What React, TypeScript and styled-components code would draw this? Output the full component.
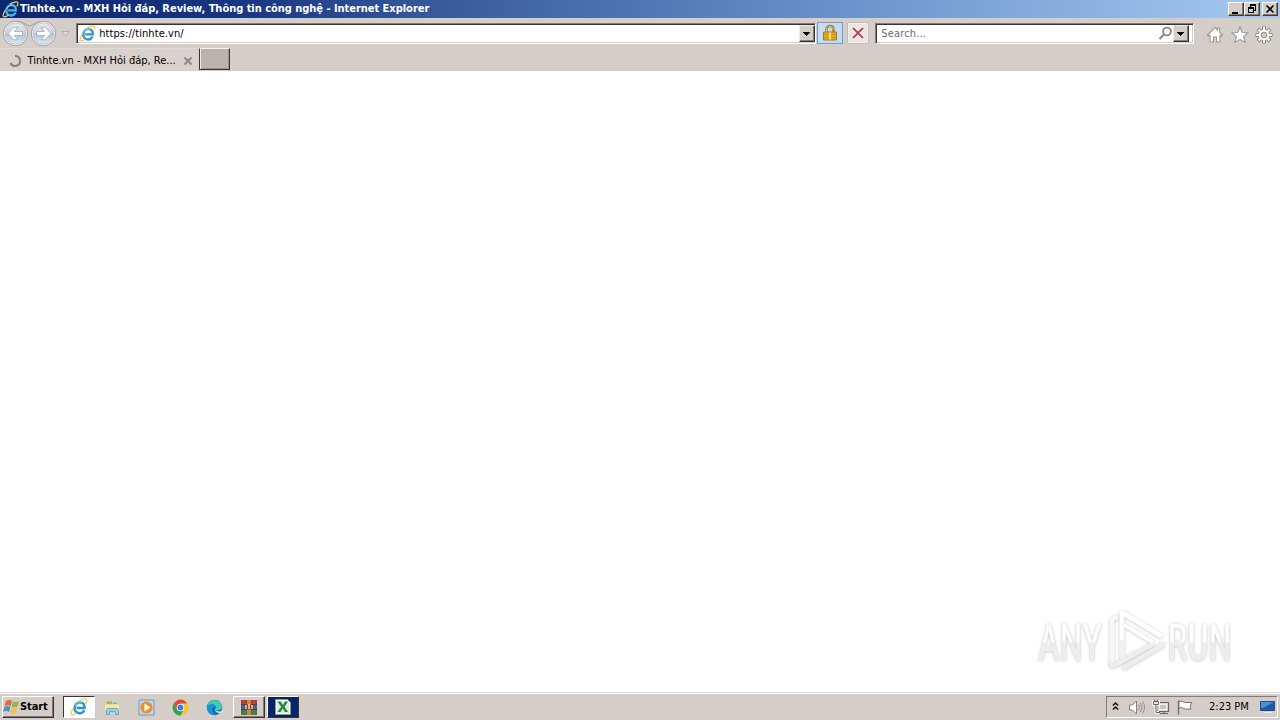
import * as React from 'react'
import styled, { createGlobalStyle } from 'styled-components'

const FACE = '#d5cec8'
const SHADOW = '#827c79'
const DARK = '#3b3235'

const GlobalStyle = createGlobalStyle`
  * { box-sizing: border-box; }
  body { margin: 0; overflow: hidden; }
  svg { display: block; flex: none; }
`

const Screen = styled.div`
  width: 1280px;
  height: 720px;
  display: flex;
  flex-direction: column;
  background: #fff;
  font-family: 'DejaVu Sans Condensed', 'DejaVu Sans', Tahoma, sans-serif;
  font-stretch: condensed;
  font-size: 11px;
  color: #000;
  cursor: default;
`

const TitleBar = styled.header`
  height: 18px;
  flex: none;
  display: flex;
  align-items: center;
  padding: 0 2px;
  background: linear-gradient(90deg, #0c2770 0%, #183580 18%, #395b9c 35%, #6c92cb 66%, #a6caf0 100%);
`

const Text = styled.span<{ $spacing?: number; $bold?: boolean; $color?: string }>`
  white-space: nowrap;
  line-height: 14px;
  letter-spacing: ${p => p.$spacing || 0}px;
  font-weight: ${p => (p.$bold ? 700 : 400)};
  color: ${p => p.$color || '#000'};
`

const Title = styled(Text)`
  margin-left: 1px;
`

const Spacer = styled.div`
  flex: 1;
`

const WindowButtons = styled.div`
  display: flex;
  align-self: flex-start;
  padding-top: 2px;
`

const CaptionButton = styled.div<{ $gap?: number }>`
  width: 16px;
  height: 14px;
  margin-left: ${p => p.$gap || 0}px;
  background: ${FACE};
  border: 1px solid;
  border-color: #fff #403b3b #403b3b #fff;
  box-shadow: inset -1px -1px ${SHADOW};
`

const NavBar = styled.nav`
  height: 30px;
  flex: none;
  display: flex;
  align-items: flex-start;
  padding: 0 7px 0 2px;
  background: ${FACE};
`

const NavIcons = styled.div`
  display: flex;
  width: 74px;
  height: 30px;
`

const Field = styled.div<{ $width: number; $end?: number }>`
  width: ${p => p.$width}px;
  height: 21px;
  margin-top: 5px;
  display: flex;
  align-items: center;
  background: #fff;
  border: 1px solid;
  border-color: ${SHADOW} #fff #fff ${SHADOW};
  box-shadow: inset 1px 1px ${DARK}, inset -1px -1px ${FACE};
  padding: 0 ${p => p.$end || 0}px 0 2px;
`

const DropButton = styled.div`
  width: 16px;
  height: 17px;
  display: flex;
  align-items: center;
  justify-content: center;
  background: ${FACE};
  border: 1px solid;
  border-color: #eee9e6 ${DARK} ${DARK} #eee9e6;
  box-shadow: inset -1px -1px ${SHADOW};
`

const ToolButton = styled.div<{ $lit?: boolean }>`
  width: ${p => (p.$lit ? 26 : 22)}px;
  height: 22px;
  margin: 4px 0 0 ${p => (p.$lit ? 1 : 4)}px;
  display: flex;
  align-items: center;
  justify-content: center;
  background: ${p => (p.$lit ? '#c6dcf5' : '#eae5e3')};
  border: 1px solid ${p => (p.$lit ? '#6f9ed2' : '#c2bbb8')};
  border-radius: ${p => (p.$lit ? 0 : 2)}px;
  box-shadow: ${p => (p.$lit ? 'none' : 'inset 0 0 0 1px #f4f0ef')};
`

const Commands = styled.div`
  display: flex;
  gap: 6.5px;
  margin: 8px 0 0 12px;
`

const TabBar = styled.div`
  height: 23px;
  flex: none;
  display: flex;
  background: ${FACE};
`

const Tab = styled.div`
  width: 199px;
  height: 23px;
  display: flex;
  align-items: center;
  padding: 1px 6px 0 8px;
  background: #d8d1cc;
  border-top: 1px solid #e3ddd9;
`

const TabText = styled(Text)`
  margin-left: 5.5px;
`

const NewTab = styled.div`
  width: 31px;
  height: 22px;
  background: #bbb3ae;
  border: 1px solid;
  border-color: #f5f1ef ${DARK} ${DARK} ${DARK};
  box-shadow: inset 1px 0 #eee9e6, inset -1px -1px #98908d;
`

const Page = styled.main`
  flex: 1;
  display: flex;
  justify-content: flex-end;
  align-items: flex-end;
  padding: 0 38px 12px 0;
`

const TaskBar = styled.footer`
  height: 28px;
  flex: none;
  display: flex;
  align-items: flex-start;
  padding: 2px 2px 0;
  background: ${FACE};
  border-top: 1px solid #dcd6d2;
  box-shadow: inset 0 1px #fff;
`

const Raised = styled.div<{ $width: number; $gap?: number; $look?: 'pressed' | 'navy' }>`
  width: ${p => p.$width}px;
  height: 22px;
  margin-top: 1px;
  margin-left: ${p => p.$gap || 0}px;
  display: flex;
  align-items: center;
  justify-content: center;
  background: ${p => (p.$look === 'pressed' ? '#fff' : p.$look === 'navy' ? '#0a246a' : FACE)};
  border: 1px solid;
  border-color: ${p => (p.$look === 'pressed' ? `${DARK} #fff #fff ${DARK}` : `#fff ${DARK} ${DARK} #fff`)};
  box-shadow: ${p => (p.$look ? 'none' : `inset -1px -1px ${SHADOW}`)};
`

const StartButton = styled(Raised)`
  justify-content: flex-start;
`

const QuickLaunch = styled.div`
  display: flex;
  margin-left: 9px;
`

const Slot = styled.div`
  width: 34px;
  height: 24px;
  display: flex;
  align-items: center;
  justify-content: center;
`

const Tray = styled.div`
  width: 172px;
  height: 22px;
  margin-top: 1px;
  display: flex;
  align-items: center;
  padding-left: 5px;
  border: 1px solid;
  border-color: ${SHADOW} #fff #fff ${SHADOW};
`

const Clock = styled(Text)`
  width: 40px;
  margin: 0 10px 0 13px;
`

const IeIcon = ({ size = 17, color = '#2b95d2' }: { size?: number; color?: string }) => (
  <svg width={size} height={size} viewBox="0 0 18 18" fill="none">
    <path d="M14.300 12.200C13.200 14.400 11.400 15.500 9.300 15.300c-3-.2-4.900-2.300-4.700-5.200C4.800 6.800 7.200 4.300 10.200 4.400c3 .1 4.700 2.200 4.400 5.500H6.500" stroke={color} strokeWidth="2.500" />
    <path d="M5 8C6.200 5.500 8.500 4.100 11.600 4.600" stroke="#8ad8f6" strokeWidth="1" />
    <path d="M3.600 9.500C.9 13.500.3 17 2.800 16.800c1.300-.1 2.600-.9 4-2M8 3.500C12 1 16 .1 16.700 1.900c.4 1-.1 2.400-1 3.900" stroke="#f3c84c" strokeWidth="1.300" />
  </svg>
)

const Arrow = () => (
  <svg width="8" height="4" viewBox="0 0 8 4" shapeRendering="crispEdges"><path d="M0 0h7L3.500 4z" /></svg>
)

const NavArrows = () => (
  <svg width="74" height="30" viewBox="0 0 74 30">
    <defs>
      <linearGradient id="round" x1="0" y1="0" x2="0" y2="1">
        <stop offset="0" stopColor="#e9eaed" /><stop offset=".48" stopColor="#ccd3dc" />
        <stop offset=".52" stopColor="#b3c2d1" /><stop offset="1" stopColor="#d5edf7" />
      </linearGradient>
    </defs>
    <path d="M13.500 3.500Q20 3 25 7q2.500 1.500 5 0 5-4 11.500-3.500" fill="none" stroke="#a29c9c" />
    {[13.5, 41.5].map((x, i) => (
      <g key={x}>
        <circle cx={x} cy="15.500" r="12.200" fill="#f1f2f4" stroke="#a19fa4" />
        <circle cx={x} cy="15.500" r="10.500" fill="url(#round)" stroke="#b8bec8" strokeWidth=".7" />
        <path
          transform={`translate(${x} 15.5) scale(${i ? -1 : 1} 1)`}
          d="M-7.500 0-1.500-6.200h4L-1.200-2H7v4h-8.200l3.700 4.200h-4z"
          fill="#fff" stroke="#9aa9b9" strokeWidth=".8"
        />
      </g>
    ))}
    <path d="M59.500 13.500h8L63.500 18z" fill="#e1dcd8" stroke="#aaa3a0" strokeWidth=".8" />
  </svg>
)

const LockIcon = () => (
  <svg width="16" height="18" viewBox="0 0 16 18">
    <path d="M4.500 9V5.500C4.500 .9 11.500 .9 11.500 5.500V9" fill="none" stroke="#a4802d" strokeWidth="2.400" />
    <path d="M4.500 8V5.500C4.500 1.600 11.500 1.600 11.500 5.500" fill="none" stroke="#dfc170" />
    <path d="M1.500 8h13v8h-13z" fill="#e1aa20" stroke="#a5781b" />
    <path d="M2 10.500h12M2 13.500h12" stroke="#c6942a" /><path d="M7 8.500h2v7H7z" fill="#f9de71" />
  </svg>
)

const StopIcon = () => (
  <svg width="14" height="14" viewBox="0 0 14 14"><path d="m2 2 10 10M12 2 2 12" stroke="#fff" strokeWidth="3.500" /><path d="m2 2 10 10M12 2 2 12" stroke="#b94b50" strokeWidth="2.100" /></svg>
)

const SearchIcon = () => (
  <svg width="15" height="15" viewBox="0 0 15 15" fill="none"><circle cx="9" cy="5.500" r="3.900" stroke="#8c8988" strokeWidth="1.900" /><path d="m6.200 8.300-4.700 4.700" stroke="#8c8988" strokeWidth="2.300" /></svg>
)

const commandPaths = [
  'M1.500 9 9 1.500l2.500 2.400V2h2v4l3 3-1.200 1.200-1.300-1V16h-3.500v-5h-3v5H4V9.200l-1.300 1z',
  'M9 1l2.300 5.500 5.700.4-4.400 3.800 1.500 5.700L9 13.300l-5.100 3.100 1.500-5.700L1 6.900l5.700-.4z',
]

const CommandIcons = () => (
  <Commands>
    {commandPaths.map(d => (
      <svg key={d} width="18" height="18" viewBox="0 0 18 18"><path d={d} fill="#fff" stroke="#9b9796" strokeWidth="1.100" /></svg>
    ))}
    <svg width="18" height="18" viewBox="-9 -9 18 18">
      {[0, 45, 90, 135, 180, 225, 270, 315].map(a => (
        <path key={a} transform={`rotate(${a})`} d="M-1.500-5v-3.100h3v3.100" fill="#fff" stroke="#8c8887" />
      ))}
      <circle r="5.600" fill="#fff" stroke="#8c8887" strokeWidth=".8" />
      <path d="M-1-7.500h2v15h-2zM-7.500-1h15v2h-15z" fill="#fff" />
      <path transform="rotate(45)" d="M-1-7.500h2v15h-2zM-7.500-1h15v2h-15z" fill="#fff" />
      <circle r="2.800" fill={FACE} stroke="#888483" />
    </svg>
  </Commands>
)

const Watermark = () => (
  <svg width="206" height="72" viewBox="0 0 206 72">
    <defs>
      <linearGradient id="fade" gradientUnits="userSpaceOnUse" x1="0" y1="-36" x2="0" y2="0">
        <stop offset=".5" stopColor="#fff" /><stop offset=".54" stopColor="#ededed" />
      </linearGradient>
      <filter id="soft" x="-10%" y="-20%" width="120%" height="140%">
        <feDropShadow dx="0" dy=".5" stdDeviation="1.500" floodColor="#777" floodOpacity=".48" />
      </filter>
    </defs>
    <g filter="url(#soft)">
      <g fontFamily="Roboto, sans-serif" fontSize="50" fill="url(#fade)" stroke="#f1f1f1" strokeWidth=".5">
        <text transform="translate(2 51.500) scale(.75 1)">ANY</text>
        <text transform="translate(131.500 51.500) scale(.75 1)">RUN</text>
      </g>
      <g fill="none" strokeWidth="4.500" strokeLinejoin="round">
        <path d="M75 52V55q0 3 3 2.500l40-22M87 60l38-22q2-1.500 1-4" stroke="#eee" />
        <path d="M82 10h-3q-3 0-3 4v40" stroke="#f7f7f7" />
        <path d="M86 50V4.500l40 24" stroke="#fff" />
        <path d="M88 17l29 17.500" stroke="#fff" strokeWidth="3.500" />
        <path d="M86 32v19" stroke="#f1f1f1" />
      </g>
    </g>
  </svg>
)

const StartFlag = () => (
  <svg width="17" height="16" viewBox="0 0 17 16">
    <path d="M3 2q3-2 6-.2L7.700 7Q5 5.500 1.700 7z" fill="#e5683a" />
    <path d="M10 2.300q3 1.500 6 0L14.500 7.500q-3 1.700-6 0z" fill="#8bb94a" />
    <path d="M1.400 8q3-1.800 6-.2L6 13q-3-1.800-6 .1z" fill="#4a93cf" />
    <path d="M8.300 8.500q3 1.600 6 0L13 13.600q-3 1.800-6 0z" fill="#f3c047" />
  </svg>
)

const FolderIcon = () => (
  <svg width="17" height="17" viewBox="0 0 17 17">
    <path d="M1 2h5l1 1.500h8V13H1z" fill="#e7cd72" /><path d="M3 2.500h5V5H3z" fill="#82bd70" /><path d="M9 3.500h4V5H9z" fill="#6ab4dd" />
    <path d="M1 5.500h14v6H1z" fill="#f6e7a5" />
    <path d="M2.500 15.500v-4q0-2 2-2h8q2 0 2 2v4h-3v-3h-6v3z" fill="#9fd0ea" stroke="#5da9d1" />
  </svg>
)

const MediaIcon = () => (
  <svg width="17" height="17" viewBox="0 0 17 17">
    <path d="M1 1h15v15H1z" fill="#b9d9ef" stroke="#659dc4" /><circle cx="8.500" cy="8.500" r="6" fill="#f28b20" /><path d="m6.500 4.500 6 4-6 4z" fill="#fff" />
  </svg>
)

const ChromeIcon = () => (
  <svg width="17" height="17" viewBox="-8.500 -8.500 17 17">
    <circle r="7.900" fill="#f6c42d" />
    <path d="M-6.800-4A7.900 7.900 0 0 1 6.800-4H0L-3.300 1.900z" fill="#dd493c" />
    <path d="M-6.800-4A7.900 7.900 0 0 0 0 7.900L3.300 1.900H-3.300z" fill="#35a156" />
    <circle r="3.800" fill="#fff" /><circle r="2.900" fill="#3d7de0" />
  </svg>
)

const EdgeIcon = () => (
  <svg width="17" height="17" viewBox="0 0 17 17">
    <circle cx="8.500" cy="8.500" r="7.800" fill="#1671bd" />
    <path d="M1 7.500C2 3 5 .8 8.800 1c4.500.2 7.300 3.500 7.300 6.500 0 2.500-2 4-4.500 3.800-2.500 0-2-1.300-1.600-2.300C9.800 5 4 4 1 7.500z" fill="#45c8b0" />
    <path d="M1 7.500C3.200 4.200 8.500 4.600 10 8c-2.500-1-4.500 1-4 3.500S8 15 9.500 16C3 16.500.6 11.500 1 7.500z" fill="#1b92d4" />
    <path d="M10 8.300c-2 2.200.5 5.500 5.800 3.600L17 11v2l-2.500 1C10 14.500 7.500 11 10 8.300z" fill="#dfe3e4" />
  </svg>
)

const RarIcon = () => (
  <svg width="18" height="17" viewBox="0 0 18 17">
    <path d="M1 1h16v5H1z" fill="#b73538" /><path d="M1 6h16v5H1z" fill="#356c9e" /><path d="M1 11h16v5H1z" fill="#347f50" />
    <path d="M1 5.500h16M1 10.500h16" stroke="#682f33" /><path d="M7 1h4v15H7z" fill="#c28a3c" />
    <path d="M4.500 5.500h9v5h-9z" fill="#773d31" /><path d="M6 6v4M9 5v5M12 6v4" stroke="#fff2c7" strokeWidth="1.300" />
    <path d="M4 1v4M14 1v4M4 11v5M14 11v5" stroke="#c95244" />
  </svg>
)

const ExcelIcon = () => (
  <svg width="18" height="18" viewBox="0 0 18 18">
    <path d="M1.500 1.500h12l3 3v12h-15z" fill="#fff" stroke="#6da679" /><path d="M3 3h10l2 2v10H3z" fill="#dcecd6" />
    <path d="M3.500 3.500h3L9 7l2-3.500h3l-3.500 5.300L14 14h-3l-2.200-3.500L6.500 14h-3l3.700-5.300z" fill="#278248" />
  </svg>
)

const TrayIcons = () => (
  <svg width="84" height="20" viewBox="0 0 84 20" fill="none">
    <path d="m.9 8.500 2.600-2.500 2.600 2.500M.9 12.500l2.600-2.500 2.600 2.500" stroke="#111" strokeWidth="1.600" />
    <path d="M17.500 8h3l4-4v13l-4-4h-3z" fill="#fff" stroke="#85817f" />
    <path d="M26.500 7.500q2 3 0 6M28.500 6q3 4.500 0 9M30.500 4.500q4 6 0 12" stroke="#918c8a" />
    <path d="M45.500 5.500h11v9h-11z" fill="#dedbd9" stroke="#696564" strokeWidth="1.200" /><path d="M47.500 7.500h7v5h-7z" fill="#c7c3c0" stroke="#f4f2f1" />
    <path d="M48 16.500h8M52 15v2" stroke="#696564" strokeWidth="1.200" />
    <path d="M41.500 3v4.500h5V3M44 7.500v8h3" stroke="#f4f2f1" strokeWidth="3" />
    <path d="M41.500 4.500h5v3h-5zM42.500 2.500v2M45.500 2.500v2M44 8v7.500h4" stroke="#696564" />
    <path d="M66.500 3.500v14" stroke="#777372" strokeWidth="1.500" />
    <path d="M67 4.500q3-1 6 1h7l-2 3.500 1 3h-6q-3-2-6-1z" fill="#fff" stroke="#777372" />
  </svg>
)

export default () => (
  <Screen>
    <GlobalStyle />
    <TitleBar>
      <IeIcon color="#43b4ea" />
      <Title $bold $color="#fff" $spacing={-0.03}>Tinhte.vn - MXH Hỏi đáp, Review, Thông tin công nghệ - Internet Explorer</Title>
      <Spacer />
      <WindowButtons>
        <CaptionButton><svg width="14" height="12"><path d="M3 9h6v2H3z" /></svg></CaptionButton>
        <CaptionButton>
          <svg width="14" height="12" fill="none" stroke="#000" shapeRendering="crispEdges"><path d="M5 2h6M5.500 2v3M10.500 2v5H9M3 5h6M3.500 5v4.500h5V5M5 1.500h6M3 4.500h6" /></svg>
        </CaptionButton>
        <CaptionButton $gap={2}>
          <svg width="14" height="12"><path d="m3.500 2.500 7 7M10.500 2.500l-7 7" stroke="#000" strokeWidth="1.600" /></svg>
        </CaptionButton>
      </WindowButtons>
    </TitleBar>
    <NavBar>
      <NavIcons><NavArrows /></NavIcons>
      <Field $width={740}>
        <IeIcon />
        <Text $spacing={0.07}>&nbsp;https://tinhte.vn/</Text>
        <Spacer />
        <DropButton><Arrow /></DropButton>
      </Field>
      <ToolButton $lit><LockIcon /></ToolButton>
      <ToolButton><StopIcon /></ToolButton>
      <Spacer />
      <Field $width={319} $end={4}>
        <Text $color="#6d6d6d" $spacing={0.15}>&nbsp;Search...</Text>
        <Spacer />
        <SearchIcon />
        <DropButton><Arrow /></DropButton>
      </Field>
      <CommandIcons />
    </NavBar>
    <TabBar>
      <Tab>
        <svg width="14" height="14" viewBox="0 0 14 14" fill="none"><path d="M7 2a5 5 0 1 1-4.500 7" stroke="#858180" strokeWidth="2" /></svg>
        <TabText>Tinhte.vn - MXH Hỏi đáp, Re...</TabText>
        <Spacer />
        <svg width="10" height="10" viewBox="0 0 10 10"><path d="m1.500 1.500 7 7M8.500 1.500l-7 7" stroke="#8d8683" strokeWidth="1.900" /></svg>
      </Tab>
      <NewTab />
    </TabBar>
    <Page><Watermark /></Page>
    <TaskBar>
      <StartButton $width={52}><StartFlag /><Text $bold $spacing={-0.1}>Start</Text></StartButton>
      <QuickLaunch>
        <Raised $width={32} $look="pressed"><IeIcon size={18} /></Raised>
        <Slot><FolderIcon /></Slot>
        <Slot><MediaIcon /></Slot>
        <Slot><ChromeIcon /></Slot>
        <Slot><EdgeIcon /></Slot>
        <Raised $width={32} $gap={2}><RarIcon /></Raised>
        <Raised $width={32} $gap={2} $look="navy"><ExcelIcon /></Raised>
      </QuickLaunch>
      <Spacer />
      <Tray>
        <TrayIcons />
        <Clock>2:23 PM</Clock>
        <svg width="17" height="16" viewBox="0 0 17 16">
          <path d="M1.500 2.500h14v9h-14z" fill="#1d59a8" stroke="#244f87" /><path d="M2 3h13L4 9H2z" fill="#4b91d2" /><path d="M5 13.500h8" stroke="#e9edf0" />
        </svg>
      </Tray>
    </TaskBar>
  </Screen>
)
